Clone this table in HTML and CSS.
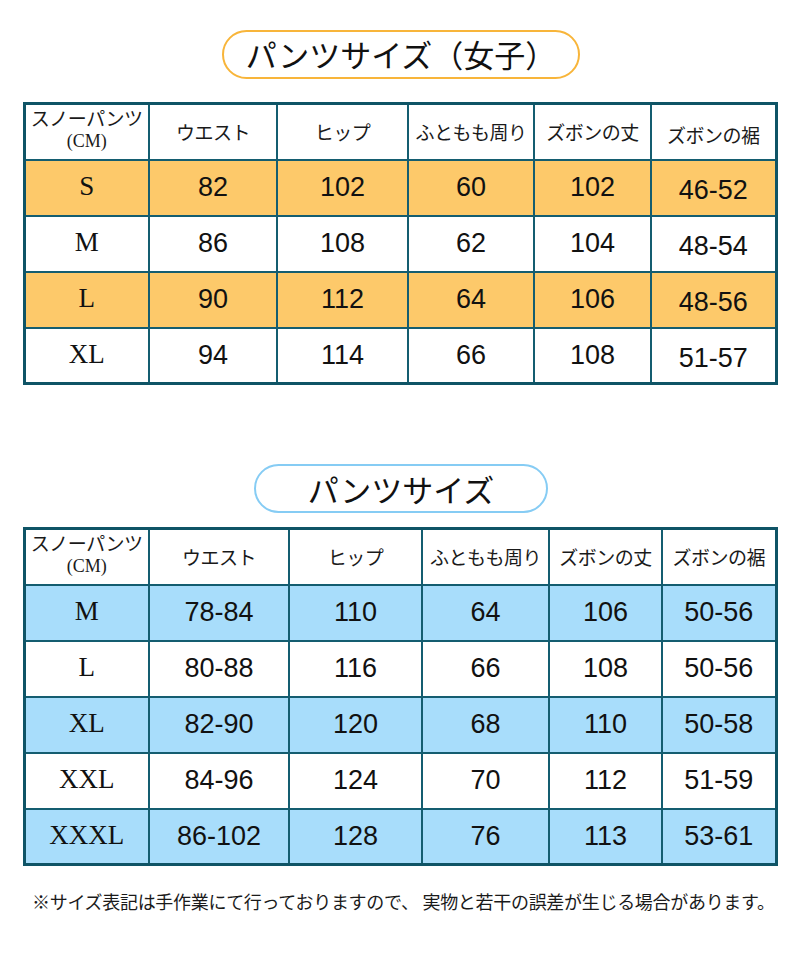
FILE: index.html
```html
<!DOCTYPE html>
<html lang="ja">
<head>
<meta charset="utf-8">
<link rel="stylesheet" href="styles.css">
</head>
<body>
<div class="page">
  <div class="title-row t1">
    <div class="pill orange">パンツサイズ（女子）</div>
  </div>
  <table class="size w">
    <colgroup>
      <col class="c1"><col class="c2"><col class="c3"><col class="c4"><col class="c5"><col class="c6">
    </colgroup>
    <tr class="head">
      <th class="first">スノーパンツ<br><span class="cm">(CM)</span></th>
      <th>ウエスト</th><th>ヒップ</th><th>ふともも周り</th><th>ズボンの丈</th><th class="low">ズボンの裾</th>
    </tr>
    <tr class="fill"><td class="sz">S</td><td>82</td><td>102</td><td>60</td><td>102</td><td class="low">46-52</td></tr>
    <tr><td class="sz">M</td><td>86</td><td>108</td><td>62</td><td>104</td><td class="low">48-54</td></tr>
    <tr class="fill"><td class="sz">L</td><td>90</td><td>112</td><td>64</td><td>106</td><td class="low">48-56</td></tr>
    <tr><td class="sz">XL</td><td>94</td><td>114</td><td>66</td><td>108</td><td class="low">51-57</td></tr>
  </table>

  <div class="title-row t2">
    <div class="pill blue">パンツサイズ</div>
  </div>
  <table class="size m">
    <colgroup>
      <col class="d1"><col class="d2"><col class="d3"><col class="d4"><col class="d5"><col class="d6">
    </colgroup>
    <tr class="head">
      <th class="first">スノーパンツ<br><span class="cm">(CM)</span></th>
      <th>ウエスト</th><th>ヒップ</th><th>ふともも周り</th><th>ズボンの丈</th><th>ズボンの裾</th>
    </tr>
    <tr class="fill"><td class="sz">M</td><td>78-84</td><td>110</td><td>64</td><td>106</td><td>50-56</td></tr>
    <tr><td class="sz">L</td><td>80-88</td><td>116</td><td>66</td><td>108</td><td>50-56</td></tr>
    <tr class="fill"><td class="sz">XL</td><td>82-90</td><td>120</td><td>68</td><td>110</td><td>50-58</td></tr>
    <tr><td class="sz">XXL</td><td>84-96</td><td>124</td><td>70</td><td>112</td><td>51-59</td></tr>
    <tr class="fill"><td class="sz">XXXL</td><td>86-102</td><td>128</td><td>76</td><td>113</td><td>53-61</td></tr>
  </table>

  <p class="note">※サイズ表記は手作業にて行っておりますので、 実物と若干の誤差が生じる場合があります。</p>
</div>
</body>
</html>
```

FILE: styles.css
```css
html, body {
  margin: 0;
  padding: 0;
  background: #ffffff;
}
.page {
  width: 800px;
  height: 960px;
  padding-top: 30px;
  box-sizing: border-box;
  font-family: "Noto Sans CJK JP", sans-serif;
  color: #111;
}
.title-row {
  display: flex;
  justify-content: center;
  padding-left: 2px;
}
.pill {
  height: 49px;
  box-sizing: border-box;
  border-radius: 25px;
  display: flex;
  align-items: center;
  justify-content: center;
  font-size: 31px;
  font-weight: 400;
  color: #111;
  background: #fff;
}
.pill.orange {
  width: 358px;
  border: 2.5px solid #f8b53a;
  padding-bottom: 2px;
}
.pill.blue {
  width: 294px;
  border: 2.5px solid #86ccf4;
}
.t1 { margin-bottom: 23px; }
.t2 { margin-top: 79px; margin-bottom: 14px; }

table.size {
  width: 752px;
  margin: 0 auto;
  border-collapse: collapse;
  table-layout: fixed;
  border: 3px solid #0f5466;
}
table.w tr { height: 56px; }
table.m tr { height: 56px; }
table.size th, table.size td {
  border: 2px solid #145d70;
  text-align: center;
  padding: 0;
  line-height: 1;
}
table.size th {
  font-weight: 400;
  font-size: 19px;
  white-space: nowrap;
  letter-spacing: -0.5px;
  color: #1a1a1a;
}
table.size th.first {
  line-height: 21px;
  padding-bottom: 4px;
}
.cm {
  font-family: "Liberation Serif", serif;
  font-size: 18px;
  letter-spacing: 0;
}
table.size td {
  font-family: "Liberation Sans", Arial, sans-serif;
  font-size: 27px;
  color: #111;
}
table.size td.sz {
  font-family: "Liberation Serif", serif;
  font-size: 27px;
  padding-bottom: 2px;
}
table.size .low { padding-top: 6px; }
tr.head { background: #fff; }
table.w tr.fill { background: #fdc96a; }
table.m tr.fill { background: #a8ddfb; }

.c1 { width: 125px; }
.c2 { width: 128px; }
.c3 { width: 131px; }
.c4 { width: 126px; }
.c5 { width: 117px; }
.c6 { width: 125px; }

.d1 { width: 125px; }
.d2 { width: 140px; }
.d3 { width: 133px; }
.d4 { width: 127px; }
.d5 { width: 113px; }
.d6 { width: 114px; }

.note {
  margin: 23px 0 0 32px;
  font-size: 18px;
  line-height: 24px;
  white-space: nowrap;
  color: #1a1a1a;
  letter-spacing: -0.3px;
}
```
